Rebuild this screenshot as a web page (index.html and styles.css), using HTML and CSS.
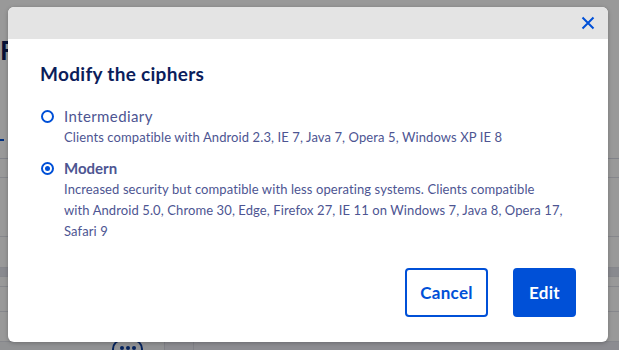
FILE: index.html
```html
<!DOCTYPE html>
<html>
<head>
	<title>Modify the ciphers</title>
	<link rel="stylesheet" href="styles.css">
</head>
<body>
	<!-- page behind the modal -->
	<div class="page">
		<h1 class="page-title">Fl</h1>
		<div class="tabs"><span class="tab-mark"></span></div>
		<div class="row row-a"></div>
		<div class="row row-b"></div>
		<div class="row row-c"></div>
		<div class="row row-band"></div>
		<div class="row row-d"></div>
		<div class="row row-e"></div>
		<div class="row row-f"></div>
		<div class="foot">
			<div class="foot-cell foot-first">
				<span class="more"><i></i><i></i><i></i></span>
			</div>
			<div class="foot-cell foot-sep"></div>
			<div class="foot-cell"></div>
		</div>
	</div>

	<!-- modal -->
	<div class="overlay">
		<div class="modal">
			<div class="modal-head">
				<button class="close" type="button" aria-label="Close">
					<svg width="14" height="14" viewBox="0 0 14 14">
						<path d="M1.5 1.5 L12.5 12.5 M12.5 1.5 L1.5 12.5" stroke="#0050d7" stroke-width="2" fill="none"/>
					</svg>
				</button>
			</div>
			<div class="modal-body">
				<h2 class="title">Modify the ciphers</h2>
				<label class="option">
					<span class="radio"></span>
					<span class="option-name">Intermediary</span>
				</label>
				<p class="desc">Clients compatible with Android 2.3, IE 7, Java 7, Opera 5, Windows XP IE 8</p>
				<label class="option option-second">
					<span class="radio radio-on"></span>
					<span class="option-name option-bold">Modern</span>
				</label>
				<p class="desc">Increased security but compatible with less operating systems. Clients compatible<br>with Android 5.0, Chrome 30, Edge, Firefox 27, IE 11 on Windows 7, Java 8, Opera 17, Safari 9</p>
			</div>
			<div class="modal-foot">
				<button class="btn btn-ghost" type="button">Cancel</button>
				<button class="btn btn-primary" type="button">Edit</button>
			</div>
		</div>
	</div>
</body>
</html>
```

FILE: styles.css
```css
*{
	margin: 0;
	padding: 0;
	box-sizing: border-box;
}
body{
	width: 619px;
	height: 350px;
	overflow: hidden;
	position: relative;
	background: #fff;
	font-family: Lato, "Liberation Sans", sans-serif;
}

/* page behind */
.page{
	padding-top: 38px;
}
.page-title{
	font-size: 26px;
	line-height: 24px;
	height: 24px;
	color: #0b1d5b;
	font-weight: 700;
}
.tabs{
	margin-top: 77px;
	height: 20px;
	border-bottom: 1px solid #d8dbe6;
}
.tab-mark{
	display: block;
	width: 4px;
	height: 2px;
	background: #0050d7;
}
.row{
	border-bottom: 1px solid #dfe2ea;
}
.row-a{ height: 19px; }
.row-b{ height: 59px; }
.row-c{ height: 31px; }
.row-band{
	height: 9px;
	background: #e4e6ee;
}
.row-d{ height: 10px; }
.row-e{ height: 25px; }
.row-f{ height: 30px; }
.foot{
	display: flex;
	height: 8px;
	background: #e9eaf2;
}
.foot-cell{
	flex: 1;
}
.foot-first{
	flex: 0 0 164px;
	padding-left: 112px;
	background: #f2f3f7;
}
.foot-sep{
	flex: 0 0 30px;
	border-left: 1px solid #d6d8e2;
	border-right: 1px solid #d6d8e2;
}
.more{
	display: flex;
	justify-content: center;
	gap: 2px;
	width: 31px;
	height: 20px;
	margin-top: -3px;
	padding-top: 5px;
	border: 2px solid #0b3c9c;
	border-radius: 10px;
}
.more i{
	width: 4px;
	height: 4px;
	border-radius: 50%;
	background: #0b3c9c;
}

/* modal */
.overlay{
	position: absolute;
	left: 0;
	top: 0;
	right: 0;
	bottom: 0;
	background: rgba(0, 0, 0, 0.4);
	padding: 7px 11px 8px 8px;
}
.modal{
	width: 600px;
	height: 335px;
	background: #fff;
	border-radius: 6px;
	overflow: hidden;
	box-shadow: 0 1px 4px rgba(0, 0, 0, 0.25);
	display: flex;
	flex-direction: column;
}
.modal-head{
	height: 32px;
	background: #e4e4e4;
	display: flex;
	justify-content: flex-end;
	align-items: center;
	padding-right: 13px;
}
.close{
	border: none;
	background: none;
	width: 14px;
	height: 14px;
	display: flex;
}
.modal-body{
	padding: 23px 32px 0 32px;
	flex: 1;
}
.title{
	font-size: 19px;
	line-height: 24px;
	font-weight: 700;
	letter-spacing: 0.3px;
	color: #0b1d5b;
	margin-bottom: 20px;
}
.option{
	display: flex;
	align-items: center;
	height: 20px;
}
.option-second{
	margin-top: 10px;
}
.radio{
	flex-shrink: 0;
	width: 13px;
	height: 13px;
	border: 2px solid #0050d7;
	border-radius: 50%;
	margin: 0 10px 0 1px;
	display: flex;
	align-items: center;
	justify-content: center;
}
.radio-on::after{
	content: "";
	width: 5px;
	height: 5px;
	border-radius: 50%;
	background: #0050d7;
}
.option-name{
	font-size: 15px;
	letter-spacing: 0.4px;
	color: #4d5592;
}
.option-bold{
	font-weight: 700;
	letter-spacing: 0;
}
.desc{
	width: 510px;
	margin: 1px 0 0 24px;
	font-size: 13px;
	line-height: 21px;
	letter-spacing: 0.1px;
	color: #4d5592;
}
.modal-foot{
	display: flex;
	justify-content: flex-end;
	gap: 25px;
	padding: 0 32px 25px 0;
}
.btn{
	height: 49px;
	border-radius: 4px;
	font-family: Lato, "Liberation Sans", sans-serif;
	font-size: 17px;
	letter-spacing: 0.3px;
	font-weight: 700;
	padding: 0;
}
.btn-ghost{
	width: 83px;
	border: 2px solid #0050d7;
	background: #fff;
	color: #0050d7;
}
.btn-primary{
	width: 63px;
	border: 2px solid #0050d7;
	background: #0050d7;
	color: #fff;
}
```
